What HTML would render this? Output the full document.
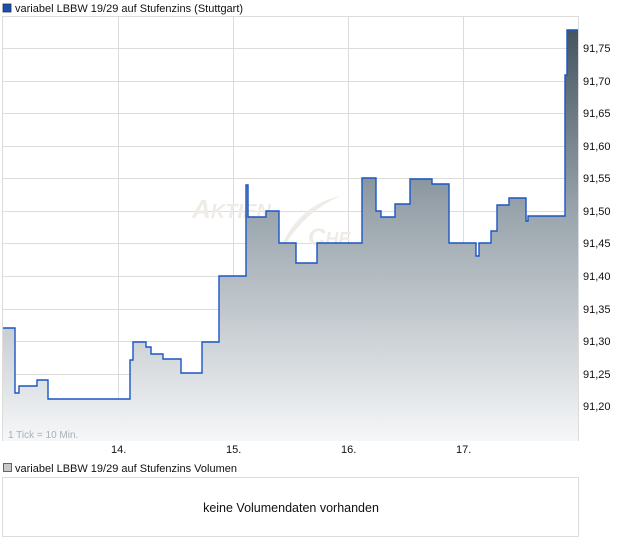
<!DOCTYPE html>
<html><head><meta charset="utf-8"><style>
body{margin:0;background:#fff;width:620px;height:546px;overflow:hidden;font-family:"Liberation Sans",sans-serif;}
</style></head><body>
<svg width="620" height="546" xmlns="http://www.w3.org/2000/svg" style="position:absolute;left:0;top:0;font-family:'Liberation Sans',sans-serif">
<defs>
<linearGradient id="g" x1="0" y1="28" x2="0" y2="441" gradientUnits="userSpaceOnUse">
<stop offset="0" stop-color="#44545f"/>
<stop offset="0.45" stop-color="#9aa5ad"/>
<stop offset="1" stop-color="#f6f7f8"/>
</linearGradient>
</defs>
<rect x="3" y="4" width="8" height="8" fill="#1a4fb5" stroke="#333" stroke-width="0.8"/>
<text x="15" y="12" font-size="11" fill="#111">variabel LBBW 19/29 auf Stufenzins (Stuttgart)</text>
<rect x="2.5" y="16.5" width="576" height="424" fill="#fff" stroke="#dcdcdc"/>
<g stroke="#dcdcdc" stroke-width="1">
<line x1="118.5" y1="16" x2="118.5" y2="441"/><line x1="233.5" y1="16" x2="233.5" y2="441"/>
<line x1="348.5" y1="16" x2="348.5" y2="441"/><line x1="463.5" y1="16" x2="463.5" y2="441"/>
<line x1="2" y1="48.5" x2="578" y2="48.5"/><line x1="2" y1="81.5" x2="578" y2="81.5"/>
<line x1="2" y1="113.5" x2="578" y2="113.5"/><line x1="2" y1="146.5" x2="578" y2="146.5"/>
<line x1="2" y1="178.5" x2="578" y2="178.5"/><line x1="2" y1="211.5" x2="578" y2="211.5"/>
<line x1="2" y1="243.5" x2="578" y2="243.5"/><line x1="2" y1="276.5" x2="578" y2="276.5"/>
<line x1="2" y1="309.5" x2="578" y2="309.5"/><line x1="2" y1="341.5" x2="578" y2="341.5"/>
<line x1="2" y1="374.5" x2="578" y2="374.5"/><line x1="2" y1="406.5" x2="578" y2="406.5"/>
</g>
<text x="192" y="218" font-size="26" font-style="italic" font-weight="bold" fill="#efebe6">A<tspan font-size="20">KTIEN</tspan></text>
<text x="308" y="245" font-size="24" font-style="italic" font-weight="bold" fill="#efebe6">C<tspan font-size="18">HE</tspan></text>
<path d="M282 245 Q300 205 340 196 Q305 212 285 245Z" fill="#efebe6"/>
<path d="M3 328 H15 V393 H19 V386 H37 V380 H48 V399 H130 V360 H133 V342 H146 V347 H151 V354 H163 V359 H181 V373 H202 V342 H219 V276 H246 V185 H248 V217 H266 V211 H279 V243 H296 V263 H317 V243 H362 V178 H376 V211 H381 V217 H395 V204 H410 V179 H432 V184 H449 V243 H476 V256 H479 V243 H491 V231 H497 V205 H509 V198 H526 V221 H528 V216 H565 V75 H567 V30 H578 V441 H3Z" fill="url(#g)"/>
<path d="M3 328 H15 V393 H19 V386 H37 V380 H48 V399 H130 V360 H133 V342 H146 V347 H151 V354 H163 V359 H181 V373 H202 V342 H219 V276 H246 V185 H248 V217 H266 V211 H279 V243 H296 V263 H317 V243 H362 V178 H376 V211 H381 V217 H395 V204 H410 V179 H432 V184 H449 V243 H476 V256 H479 V243 H491 V231 H497 V205 H509 V198 H526 V221 H528 V216 H565 V75 H567 V30 H578" fill="none" stroke="#1a56c4" stroke-width="1.4"/>
<g font-size="11" fill="#111">
<text x="583" y="52">91,75</text><text x="583" y="85">91,70</text><text x="583" y="117">91,65</text>
<text x="583" y="150">91,60</text><text x="583" y="182">91,55</text><text x="583" y="215">91,50</text>
<text x="583" y="247">91,45</text><text x="583" y="280">91,40</text><text x="583" y="313">91,35</text>
<text x="583" y="345">91,30</text><text x="583" y="378">91,25</text><text x="583" y="410">91,20</text>
<text x="111" y="453">14.</text><text x="226" y="453">15.</text><text x="341" y="453">16.</text><text x="456" y="453">17.</text>
</g>
<text x="8" y="438" font-size="10" fill="#a8b0b8">1 Tick = 10 Min.</text>
<rect x="3.5" y="463.5" width="8" height="8" fill="#c8c8c8" stroke="#444" stroke-width="0.8"/>
<text x="15" y="472" font-size="11" fill="#111">variabel LBBW 19/29 auf Stufenzins Volumen</text>
<rect x="2.5" y="477.5" width="576" height="59" fill="#fff" stroke="#dcdcdc"/>
<text x="291" y="512" font-size="12.5" fill="#111" text-anchor="middle">keine Volumendaten vorhanden</text>
</svg>
</body></html>
